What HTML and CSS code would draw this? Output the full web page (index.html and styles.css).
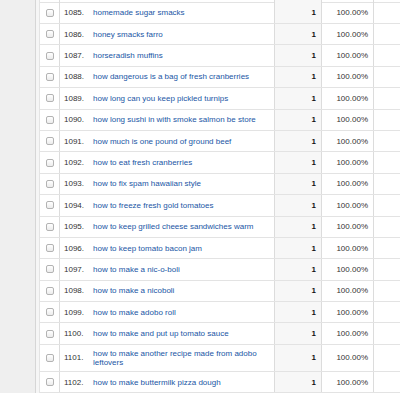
FILE: index.html
```html
<!DOCTYPE html>
<html>
<head>
<meta charset="utf-8">
<link rel="stylesheet" href="styles.css">
</head>
<body>
<div class="page">
  <div class="sidebar"></div>
  <div class="strip"></div>
  <div class="table">
    <div class="row partial"><div class="c-check"></div><div class="c-idx"></div><div class="c-name"></div><div class="c-count"></div><div class="c-pct"></div><div class="c-fill"></div></div>
    <div class="row"><div class="c-check"><input type="checkbox" class="cb"></div><div class="c-idx">1085.</div><div class="c-name"><a href="#">homemade sugar smacks</a></div><div class="c-count">1</div><div class="c-pct">100.00%</div><div class="c-fill"></div></div>
    <div class="row"><div class="c-check"><input type="checkbox" class="cb"></div><div class="c-idx">1086.</div><div class="c-name"><a href="#">honey smacks farro</a></div><div class="c-count">1</div><div class="c-pct">100.00%</div><div class="c-fill"></div></div>
    <div class="row"><div class="c-check"><input type="checkbox" class="cb"></div><div class="c-idx">1087.</div><div class="c-name"><a href="#">horseradish muffins</a></div><div class="c-count">1</div><div class="c-pct">100.00%</div><div class="c-fill"></div></div>
    <div class="row"><div class="c-check"><input type="checkbox" class="cb"></div><div class="c-idx">1088.</div><div class="c-name"><a href="#">how dangerous is a bag of fresh cranberries</a></div><div class="c-count">1</div><div class="c-pct">100.00%</div><div class="c-fill"></div></div>
    <div class="row"><div class="c-check"><input type="checkbox" class="cb"></div><div class="c-idx">1089.</div><div class="c-name"><a href="#">how long can you keep pickled turnips</a></div><div class="c-count">1</div><div class="c-pct">100.00%</div><div class="c-fill"></div></div>
    <div class="row"><div class="c-check"><input type="checkbox" class="cb"></div><div class="c-idx">1090.</div><div class="c-name"><a href="#">how long sushi in with smoke salmon be store</a></div><div class="c-count">1</div><div class="c-pct">100.00%</div><div class="c-fill"></div></div>
    <div class="row"><div class="c-check"><input type="checkbox" class="cb"></div><div class="c-idx">1091.</div><div class="c-name"><a href="#">how much is one pound of ground beef</a></div><div class="c-count">1</div><div class="c-pct">100.00%</div><div class="c-fill"></div></div>
    <div class="row"><div class="c-check"><input type="checkbox" class="cb"></div><div class="c-idx">1092.</div><div class="c-name"><a href="#">how to eat fresh cranberries</a></div><div class="c-count">1</div><div class="c-pct">100.00%</div><div class="c-fill"></div></div>
    <div class="row"><div class="c-check"><input type="checkbox" class="cb"></div><div class="c-idx">1093.</div><div class="c-name"><a href="#">how to fix spam hawaiian style</a></div><div class="c-count">1</div><div class="c-pct">100.00%</div><div class="c-fill"></div></div>
    <div class="row"><div class="c-check"><input type="checkbox" class="cb"></div><div class="c-idx">1094.</div><div class="c-name"><a href="#">how to freeze fresh gold tomatoes</a></div><div class="c-count">1</div><div class="c-pct">100.00%</div><div class="c-fill"></div></div>
    <div class="row"><div class="c-check"><input type="checkbox" class="cb"></div><div class="c-idx">1095.</div><div class="c-name"><a href="#">how to keep grilled cheese sandwiches warm</a></div><div class="c-count">1</div><div class="c-pct">100.00%</div><div class="c-fill"></div></div>
    <div class="row"><div class="c-check"><input type="checkbox" class="cb"></div><div class="c-idx">1096.</div><div class="c-name"><a href="#">how to keep tomato bacon jam</a></div><div class="c-count">1</div><div class="c-pct">100.00%</div><div class="c-fill"></div></div>
    <div class="row"><div class="c-check"><input type="checkbox" class="cb"></div><div class="c-idx">1097.</div><div class="c-name"><a href="#">how to make a nic-o-boli</a></div><div class="c-count">1</div><div class="c-pct">100.00%</div><div class="c-fill"></div></div>
    <div class="row"><div class="c-check"><input type="checkbox" class="cb"></div><div class="c-idx">1098.</div><div class="c-name"><a href="#">how to make a nicoboli</a></div><div class="c-count">1</div><div class="c-pct">100.00%</div><div class="c-fill"></div></div>
    <div class="row"><div class="c-check"><input type="checkbox" class="cb"></div><div class="c-idx">1099.</div><div class="c-name"><a href="#">how to make adobo roll</a></div><div class="c-count">1</div><div class="c-pct">100.00%</div><div class="c-fill"></div></div>
    <div class="row"><div class="c-check"><input type="checkbox" class="cb"></div><div class="c-idx">1100.</div><div class="c-name"><a href="#">how to make and put up tomato sauce</a></div><div class="c-count">1</div><div class="c-pct">100.00%</div><div class="c-fill"></div></div>
    <div class="row"><div class="c-check"><input type="checkbox" class="cb"></div><div class="c-idx">1101.</div><div class="c-name"><a href="#">how to make another recipe made from adobo leftovers</a></div><div class="c-count">1</div><div class="c-pct">100.00%</div><div class="c-fill"></div></div>
    <div class="row"><div class="c-check"><input type="checkbox" class="cb"></div><div class="c-idx">1102.</div><div class="c-name"><a href="#">how to make buttermilk pizza dough</a></div><div class="c-count">1</div><div class="c-pct">100.00%</div><div class="c-fill"></div></div>
    <div class="row tail"><div class="c-check"></div><div class="c-idx"></div><div class="c-name"></div><div class="c-count"></div><div class="c-pct"></div><div class="c-fill"></div></div>
  </div>
</div>
</body>
</html>
```

FILE: styles.css
```css
html, body {
  margin: 0;
  padding: 0;
  background: #ffffff;
  overflow: hidden;
}
body {
  font-family: "Liberation Sans", Arial, Helvetica, sans-serif;
  font-size: 8px;
  color: #333333;
}
.page {
  display: flex;
  width: 400px;
  height: 393px;
  overflow: hidden;
}
.sidebar {
  width: 35px;
  flex: none;
  background: #efefef;
  border-right: 1px solid #d6d6d6;
}
.strip {
  width: 3px;
  flex: none;
  background: #f6f6f6;
  border-right: 1px solid #e4e4e4;
}
.table {
  flex: 1;
  display: flex;
  flex-direction: column;
  min-width: 0;
}
.row {
  display: grid;
  grid-template-columns: 20px 28px 187px 47px 52px 1fr;
  min-height: 21.4px;
  box-sizing: border-box;
  border-bottom: 1px solid #e3e3e3;
  flex: none;
}
.row.partial {
  min-height: 2.6px;
  height: 2.6px;
}
.row.tail {
  flex: 1;
  border-bottom: none;
}
.row > div {
  display: flex;
  align-items: center;
  box-sizing: border-box;
}
.c-check {
  justify-content: center;
  border-right: 1px solid #dcdcdc;
}
.c-idx {
  padding-left: 4px;
  color: #333333;
}
.c-name {
  padding: 4px 8px 4px 5px;
  line-height: 9px;
  border-right: 1px solid #dcdcdc;
}
.c-name a {
  color: #2156a5;
  text-decoration: none;
}
.c-count {
  justify-content: flex-end;
  padding-right: 5px;
  background: #f7f7f7;
  border-right: 1px solid #dcdcdc;
  color: #111111;
  font-weight: bold;
}
.c-pct {
  justify-content: flex-end;
  padding-right: 5px;
  border-right: 1px solid #dcdcdc;
  color: #333333;
}
.cb {
  appearance: none;
  -webkit-appearance: none;
  margin: 0 0 0 1px;
  width: 8px;
  height: 8px;
  box-sizing: border-box;
  border: 1px solid #b3b3b3;
  border-radius: 2px;
  background: linear-gradient(#ffffff, #ececec);
}
```
